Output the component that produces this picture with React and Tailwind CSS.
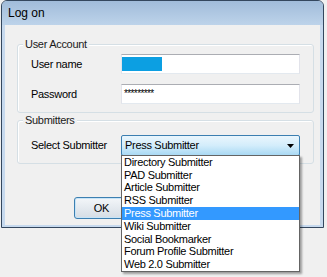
import React from "react";

const submitters = [
  "Directory Submitter",
  "PAD Submitter",
  "Article Submitter",
  "RSS Submitter",
  "Press Submitter",
  "Wiki Submitter",
  "Social Bookmarker",
  "Forum Profile Submitter",
  "Web 2.0 Submitter",
];

const GroupBox = ({ title, className, children }) => (
  <div
    className={`relative ml-[12px] w-[297px] rounded-[3px] border border-[#d5dfe5] shadow-[inset_1px_1px_0_#ffffff] ${className}`}
  >
    <span className="absolute -top-[8px] left-[5px] bg-[#f0f0f0] px-[2px] text-[11px] leading-[14px] tracking-[-0.3px] text-[#1a1a1a]">
      {title}
    </span>
    {children}
  </div>
);

const TextBox = ({ children }) => (
  <div className="flex h-[20px] w-[179px] items-center border border-t-[#abadb3] border-r-[#e2e3ea] border-b-[#e3e9ef] border-l-[#e2e3ea] bg-white">
    {children}
  </div>
);

const App = () => {
  const selected = "Press Submitter";

  return (
    <div className="h-[277px] w-[327px] overflow-hidden bg-[#f0f0f0] pl-[1px] font-['Liberation_Sans',Arial,sans-serif] text-black">
      {/* Window */}
      <div className="flex h-[228px] w-[323px] flex-col rounded-t-[6px] border border-[#34475e] bg-[#c6d9ee]">
        {/* Title bar */}
        <div className="flex h-[24px] items-center rounded-t-[5px] bg-gradient-to-b from-[#a1bcda] to-[#bdd3ea] pl-[6px] text-[12px]">
          Log on
        </div>

        {/* Client area */}
        <div className="mx-[3px] flex h-[200px] flex-col bg-[#f0f0f0] text-[11px] tracking-[-0.3px]">
          <GroupBox title="User Account" className="mt-[19px] h-[69px] pt-[9px]">
            <div className="flex h-[20px] items-center">
              <span className="w-[103px] pl-[13px]">User name</span>
              <TextBox>
                <div className="ml-[0px] h-[14px] w-[40px] bg-[#0c9fe2]" />
              </TextBox>
            </div>
            <div className="mt-[10px] flex h-[20px] items-center">
              <span className="w-[103px] pl-[13px]">Password</span>
              <TextBox>
                <span className="pl-[2px] text-[10px] leading-none tracking-[-0.6px]">*********</span>
              </TextBox>
            </div>
          </GroupBox>

          <GroupBox title="Submitters" className="mt-[7px] h-[44px] pt-[14px]">
            <div className="flex h-[21px] items-center">
              <span className="w-[103px] pl-[13px]">Select Submitter</span>
              <div className="relative h-[21px] w-[179px]">
                <div className="flex h-full items-center rounded-[2px] border border-[#3c7fb1] bg-gradient-to-b from-[#eaf6fd] via-[#d3edfb] to-[#a9d9f4] pl-[3px]">
                  <span className="flex-1">{selected}</span>
                  <svg width="7" height="4" viewBox="0 0 7 4" className="mr-[5px]">
                    <path d="M0 0H7L3.5 4Z" fill="#000" />
                  </svg>
                </div>

                {/* Open drop-down list */}
                <ul className="absolute left-0 top-[20px] z-10 w-[179px] border border-[#646464] bg-white py-[0px] shadow-[2px_2px_2px_rgba(0,0,0,0.35)]">
                  {submitters.map((item) => (
                    <li
                      key={item}
                      className={`flex h-[12.8px] items-center pl-[2px] leading-none ${
                        item === selected ? "bg-[#3399ff] text-white" : "text-black"
                      }`}
                    >
                      {item}
                    </li>
                  ))}
                </ul>
              </div>
            </div>
          </GroupBox>

          <button className="ml-[69px] mt-[33px] flex h-[22px] w-[55px] items-center justify-center rounded-[3px] border border-[#3c7fb1] bg-gradient-to-b from-[#f3f6f9] to-[#d5dde5] shadow-[inset_0_0_0_1px_#c7e4f7] text-[11px]">
            OK
          </button>
        </div>
      </div>
    </div>
  );
};

export default App;
